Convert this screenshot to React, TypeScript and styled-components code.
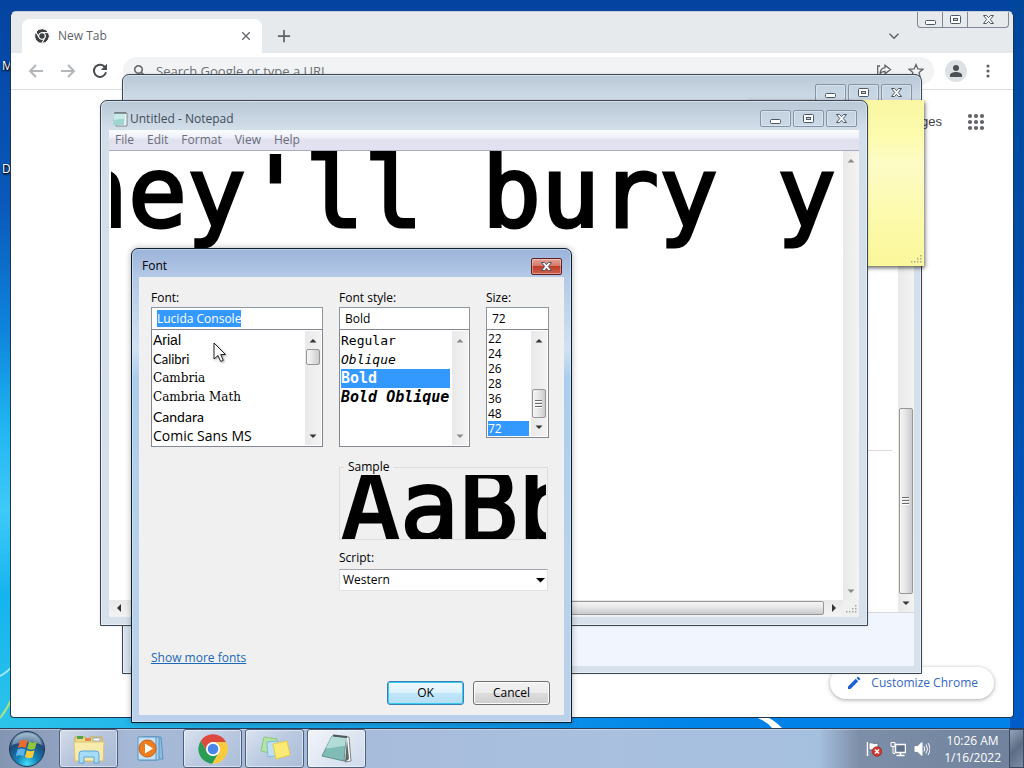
import React, { useEffect, useRef } from "react";
import styled, { createGlobalStyle, css } from "styled-components";

const ui = `"Open Sans", "Noto Sans", sans-serif`;
const mono = `"DejaVu Sans Mono", "Liberation Mono", monospace`;

const GlobalStyle = createGlobalStyle`
  *, *::before, *::after { box-sizing: border-box; }
  html, body { margin: 0; height: 100%; }
  body { font: 12px/16px ${ui}; color: #000; overflow: hidden; }
  button, input, select, textarea { font: inherit; color: inherit; margin: 0; }
  svg { display: block; }
`;

/* ---------- desktop ---------- */

const Screen = styled.div`
  display: flex;
  flex-direction: column;
  height: 100vh;
  overflow: hidden;
`;

const Desktop = styled.main`
  position: relative;
  flex: 1;
  min-height: 0;
  background:
    linear-gradient(180deg, #00479c 0, #0050ae 50%, #005cc8 100%) 100% 0 / 14px 100% no-repeat,
    linear-gradient(90deg, rgba(0, 168, 236, 0) 0%, rgba(0, 130, 232, 1) 70%) 0 100% / 100% 12px no-repeat,
    linear-gradient(180deg, #0443a0 0%, #0a58ba 28%, #0e86dc 46%, #1fb4f0 58%, #3fcaf8 70%, #14b4ee 82%, #2cc4ea 100%);
`;

const Wallpaper = styled.svg`
  position: absolute;
  inset: 0;
  width: 100%;
  height: 100%;
`;

const DesktopLabel = styled.span<{ $top: number }>`
  position: absolute;
  left: 2px;
  top: ${(p) => p.$top}px;
  color: #fff;
  text-shadow: 0 1px 2px #000, 1px 1px 2px #000;
`;

/* ---------- window frame ---------- */

const Frame = styled.section<{ $x: number; $y: number; $w: number; $h: number; $edge: number; $active?: boolean }>`
  position: absolute;
  left: ${(p) => p.$x}px;
  top: ${(p) => p.$y}px;
  width: ${(p) => p.$w}px;
  height: ${(p) => p.$h}px;
  display: flex;
  flex-direction: column;
  padding: 0 ${(p) => p.$edge}px ${(p) => p.$edge}px;
  border: 1px solid #3a4653;
  border-radius: 7px 7px 0 0;
  background: linear-gradient(180deg, #b9c8d7 0, #d2dee9 28px, #d6e1eb 100%);
  box-shadow: inset 0 0 0 1px rgba(255, 255, 255, 0.45), 0 0 3px rgba(0, 0, 0, 0.12);
  ${(p) =>
    p.$active &&
    css`
      border-color: #0d1f2b;
      background: linear-gradient(180deg, #9bb3d9 0, #b4c9e6 28px, #d0e2f2 100px, #a9cdec 130px, #b7d2ea 300px, #bbd0ea 100%);
      box-shadow: inset 0 0 0 1px rgba(220, 240, 255, 0.5), 0 0 6px rgba(0, 0, 0, 0.3);
    `}
`;

const TitleBar = styled.header<{ $h: number }>`
  flex: none;
  display: flex;
  align-items: center;
  gap: 2px;
  height: ${(p) => p.$h}px;
  padding: 6px 2px 0 3px;
`;

const Title = styled.h1<{ $soft?: boolean }>`
  flex: 1;
  margin: 0;
  font: 12px/16px ${ui};
  color: ${(p) => (p.$soft ? "#3f4c5a" : "#000")};
`;

const CaptionButton = styled.button<{ $danger?: boolean }>`
  display: grid;
  place-items: center;
  width: 31px;
  height: 17px;
  padding: 0;
  border: 1px solid #8494a8;
  border-radius: 2px;
  background: rgba(200, 214, 228, 0.5);
  box-shadow: inset 0 0 0 1px rgba(255, 255, 255, 0.35);
  ${(p) =>
    p.$danger &&
    css`
      border-color: #5f2020;
      background: linear-gradient(180deg, #e5a397 0, #d5776a 45%, #bc3d28 50%, #d0614b 100%);
    `}
`;

const MinIcon = () => (
  <svg width="13" height="11" viewBox="0 0 13 11">
    <rect x="1.5" y="6.5" width="10" height="4" rx="1" fill="#fff" stroke="#4a5868" />
  </svg>
);
const MaxIcon = () => (
  <svg width="13" height="11" viewBox="0 0 13 11">
    <rect x="1.5" y="1.5" width="10" height="8" rx="1" fill="#fff" stroke="#4a5868" />
    <rect x="4.5" y="4.5" width="4" height="2" fill="#c8d4e0" stroke="#4a5868" />
  </svg>
);
const CloseIcon = () => (
  <svg width="13" height="11" viewBox="0 0 13 11">
    <path
      d="M1.5 1.5h3l2 2.2 2-2.2h3L8.3 5.5l3.2 4h-3l-2-2.2-2 2.2h-3l3.2-4z"
      fill="#fff"
      stroke="#4a5868"
      strokeLinejoin="round"
    />
  </svg>
);

const CaptionButtons = () => (
  <>
    <CaptionButton aria-label="Minimize"><MinIcon /></CaptionButton>
    <CaptionButton aria-label="Maximize"><MaxIcon /></CaptionButton>
    <CaptionButton aria-label="Close"><CloseIcon /></CaptionButton>
  </>
);

/* ---------- scrollbars ---------- */

const Bar = styled.div<{ $across?: boolean }>`
  flex: none;
  display: flex;
  flex-direction: ${(p) => (p.$across ? "row" : "column")};
  ${(p) => (p.$across ? "height: 16px; flex: 1;" : "width: 16px;")}
  background: linear-gradient(${(p) => (p.$across ? "180deg" : "90deg")}, #e9e9e9, #f3f3f3);
`;

const Arrow = styled.button<{ $across?: boolean }>`
  flex: none;
  display: grid;
  place-items: center;
  width: ${(p) => (p.$across ? 19 : 16)}px;
  height: ${(p) => (p.$across ? 16 : 18)}px;
  padding: 0;
  border: 0;
  background: none;
`;

const Gap = styled.div<{ $size?: number }>`
  flex: ${(p) => (p.$size === undefined ? "1" : `0 0 ${p.$size}px`)};
`;

const Thumb = styled.div<{ $across?: boolean; $size?: number }>`
  flex: ${(p) => (p.$size === undefined ? "1" : `0 0 ${p.$size}px`)};
  display: grid;
  place-items: center;
  margin: ${(p) => (p.$across ? "1px 0" : "0 1px")};
  border: 1px solid #979797;
  border-radius: 2px;
  background: linear-gradient(${(p) => (p.$across ? "180deg" : "90deg")}, #f6f6f6 0, #e6e6e6 45%, #c9cbce 100%);
`;

const arrowPaths = {
  up: "M0.5 6.5L4 3l3.5 3.5z",
  down: "M0.5 2.5L4 6l3.5-3.5z",
  left: "M6 0L2 4l4 4z",
  right: "M2 0l4 4-4 4z",
};

const Tri = ({ dir, dim }: { dir: keyof typeof arrowPaths; dim?: boolean }) => (
  <svg width="8" height="8" viewBox="0 0 8 8">
    <path d={arrowPaths[dir]} fill={dim ? "#8a8a8a" : "#333"} />
  </svg>
);

const ComboArrow = () => (
  <svg width="9" height="8" viewBox="0 0 9 8">
    <path d="M0 2h9L4.500 6.500z" fill="#000" />
  </svg>
);

const Ridges = () => (
  <svg width="8" height="8" viewBox="0 0 8 8">
    <path d="M0 .5h7M0 3.5h7M0 6.5h7" stroke="#6c6c6c" />
    <path d="M0 1.5h7M0 4.5h7M0 7.5h7" stroke="#fff" />
  </svg>
);

const Grip = () => (
  <svg width="16" height="16" viewBox="0 0 16 16" fill="#a9a99a">
    {[[12, 4], [9, 7], [12, 7], [6, 10], [9, 10], [12, 10], [3, 10]].map(([x, y]) => (
      <rect key={`${x}-${y}`} x={x} y={y + 1} width="1.5" height="1.5" />
    ))}
  </svg>
);

type VBarProps = { before?: number; thumb?: number; after?: number; dim?: boolean; ridges?: boolean };
const VBar = ({ before, thumb, after, dim, ridges }: VBarProps) => (
  <Bar>
    <Arrow aria-label="Scroll up"><Tri dir="up" dim={dim} /></Arrow>
    <Gap $size={before} />
    {thumb !== undefined && <Thumb $size={thumb}>{ridges && <Ridges />}</Thumb>}
    {thumb !== undefined && <Gap $size={after} />}
    <Arrow aria-label="Scroll down"><Tri dir="down" dim={dim} /></Arrow>
  </Bar>
);

/* ---------- browser ---------- */

const Browser = styled.section`
  position: absolute;
  inset: 11px 10px 10px 10px;
  display: flex;
  flex-direction: column;
  overflow: hidden;
  border: 1px solid #1c3550;
  border-top-color: #c7ced6;
  border-radius: 6px 6px 4px 4px;
  background: #fff;
`;

const TabStrip = styled.div`
  flex: none;
  display: flex;
  height: 41px;
  padding-left: 11px;
  background: #e7eaed;
`;

const Tab = styled.div`
  display: flex;
  align-items: center;
  width: 240px;
  margin-top: 7px;
  padding: 0 11px 0 12px;
  border-radius: 8px 8px 0 0;
  background: #fff;
  color: #5f6368;
`;

const TabTitle = styled.span`
  flex: 1;
  padding-left: 8px;
`;

const PlainButton = styled.button<{ $w?: number }>`
  flex: none;
  display: grid;
  place-items: center;
  width: ${(p) => p.$w ?? 32}px;
  height: 32px;
  padding: 0;
  border: 0;
  background: none;
  color: #5f6368;
`;

const MutedButton = styled(PlainButton)`
  color: #b4b7ba;
`;

const StripTools = styled.div`
  flex: 1;
  display: flex;
  justify-content: space-between;
  padding: 8px 7px 0 6px;
`;

const FlatCaption = styled.div`
  flex: none;
  display: flex;
  height: 16px;
  margin-right: 4px;
  border: 1px solid #7f8893;
  border-top: 0;
  border-radius: 0 0 4px 4px;
`;

const FlatButton = styled.button<{ $w: number }>`
  display: grid;
  place-items: center;
  width: ${(p) => p.$w}px;
  padding: 0;
  border: 0;
  border-left: 1px solid #7f8893;
  background: none;
  &:first-child { border-left: 0; }
`;

const Toolbar = styled.div`
  flex: none;
  display: flex;
  align-items: center;
  height: 37px;
  padding: 0 9px;
  border-bottom: 1px solid #dadce0;
`;

const Omnibox = styled.label`
  flex: 1;
  display: flex;
  align-items: center;
  height: 28px;
  margin: 0 6px 0 7px;
  padding: 0 2px 0 11px;
  border-radius: 14px;
  background: #f1f3f4;
  color: #5f6368;
`;

const OmniInput = styled.input`
  flex: 1;
  min-width: 0;
  height: 24px;
  padding: 0 10px;
  border: 0;
  background: none;
  font-size: 13px;
  &::placeholder { color: #6b7075; opacity: 1; }
`;

const Avatar = styled.span`
  display: grid;
  place-items: center;
  width: 22px;
  height: 22px;
  border-radius: 50%;
  background: #dee1e6;
`;

const NewTabPage = styled.div`
  flex: 1;
  display: flex;
  flex-direction: column;
  justify-content: space-between;
  align-items: flex-end;
  padding: 16px 19px 18px;
`;

const PageLinks = styled.nav`
  display: flex;
  align-items: center;
  gap: 18px;
  padding-right: 2px;
`;

const PageLink = styled.a`
  color: #3c4043;
  font: 13px/16px "Liberation Sans", sans-serif;
  text-decoration: none;
`;

const Customize = styled.button`
  display: flex;
  align-items: center;
  gap: 9px;
  height: 32px;
  padding: 0 16px;
  border: 0;
  border-radius: 16px;
  background: #fff;
  box-shadow: 0 1px 4px rgba(0, 0, 0, 0.35);
  color: #3367c4;
`;

const chromeParts = [
  "M5.54 12.03A22 22 0 0 1 43.6 14L24 14A10 10 0 0 0 15.34 29Z",
  "M43.6 14A22 22 0 0 1 22.86 45.97L32.66 29A10 10 0 0 0 24 14Z",
  "M22.86 45.97A22 22 0 0 1 5.54 12.03L15.34 29A10 10 0 0 0 32.66 29Z",
];

const ChromeMark = ({ size, colors, core, gap }: { size: number; colors: string[]; core: string; gap?: number }) => (
  <svg width={size} height={size} viewBox="0 0 48 48">
    {chromeParts.map((d, i) => (
      <path key={d} d={d} fill={colors[i]} stroke="#fff" strokeWidth={gap ?? 0} />
    ))}
    <circle cx="24" cy="24" r="10.5" fill="#fff" />
    <circle cx="24" cy="24" r="8" fill={core} />
  </svg>
);

const Glyph = ({ d, size = 16, width = 2 }: { d: string; size?: number; width?: number }) => (
  <svg width={size} height={size} viewBox="0 0 16 16" fill="none" stroke="currentColor" strokeWidth={width}>
    <path d={d} />
  </svg>
);

const BrowserWindow = () => (
  <Browser aria-label="Browser">
    <TabStrip>
      <Tab>
        <ChromeMark size={16} colors={["#3c4043", "#3c4043", "#3c4043"]} core="#3c4043" gap={3} />
        <TabTitle>New Tab</TabTitle>
        <PlainButton $w={10} aria-label="Close tab">
          <Glyph size={10} width={2} d="M2 2l12 12M14 2L2 14" />
        </PlainButton>
      </Tab>
      <StripTools>
        <PlainButton aria-label="New tab"><Glyph size={14} d="M8 1v14M1 8h14" /></PlainButton>
        <PlainButton aria-label="Search tabs"><Glyph size={12} width={2} d="M2 5l6 6 6-6" /></PlainButton>
      </StripTools>
      <FlatCaption>
        <FlatButton $w={24} aria-label="Minimize"><MinIcon /></FlatButton>
        <FlatButton $w={25} aria-label="Maximize"><MaxIcon /></FlatButton>
        <FlatButton $w={41} aria-label="Close"><CloseIcon /></FlatButton>
      </FlatCaption>
    </TabStrip>
    <Toolbar>
      <MutedButton aria-label="Back"><Glyph d="M15 8H2M8 2L2 8l6 6" /></MutedButton>
      <MutedButton aria-label="Forward"><Glyph d="M1 8h13M8 2l6 6-6 6" /></MutedButton>
      <PlainButton aria-label="Reload">
        <svg width="16" height="16" viewBox="0 0 16 16" fill="none" stroke="#4a4d51" strokeWidth="2">
          <path d="M13.3 4.6A6.1 6.1 0 1 0 14 9.2" />
          <path d="M15 .8V7H8.8z" fill="#4a4d51" stroke="none" />
        </svg>
      </PlainButton>
      <Omnibox>
        <Glyph size={12} width={2} d="M6 1a5 5 0 1 0 .01 0M10 10l5 5" />
        <OmniInput placeholder="Search Google or type a URL" aria-label="Address" />
        <PlainButton aria-label="Share">
          <svg width="16" height="16" viewBox="0 0 16 16" fill="none" stroke="#5f6368" strokeWidth="1.3">
            <path d="M4 3H1.7v11.3h10.6V12" />
            <path d="M9 2.2L14.5 6.500 9 10.800V8.300C6.500 8.300 5 9.200 4 11 4.200 7.500 6 5 9 4.700z" />
          </svg>
        </PlainButton>
        <PlainButton aria-label="Bookmark">
          <svg width="16" height="16" viewBox="0 0 16 16" fill="none" stroke="#5f6368" strokeWidth="1.3">
            <path d="M8 1.500l1.900 4.500 4.900.4-3.700 3.200 1.100 4.800L8 11.900l-4.200 2.500 1.100-4.800L1.200 6.400l4.900-.4z" />
          </svg>
        </PlainButton>
      </Omnibox>
      <PlainButton aria-label="Profile">
        <Avatar>
          <svg width="14" height="14" viewBox="0 0 14 14" fill="#4d5156">
            <circle cx="7" cy="4" r="3" />
            <path d="M1 13V11c0-2 3.500-3 6-3s6 1 6 3v2z" />
          </svg>
        </Avatar>
      </PlainButton>
      <PlainButton aria-label="Menu">
        <svg width="4" height="14" viewBox="0 0 4 14" fill="#5f6368">
          <circle cx="2" cy="2" r="1.6" /><circle cx="2" cy="7" r="1.6" /><circle cx="2" cy="12" r="1.6" />
        </svg>
      </PlainButton>
    </Toolbar>
    <NewTabPage>
      <PageLinks>
        <PageLink href="#images">Images</PageLink>
        <PlainButton aria-label="Apps">
          <svg width="18" height="18" viewBox="0 0 18 18" fill="#5f6368">
            {[3, 9, 15].map((y) => [3, 9, 15].map((x) => <circle key={`${x}-${y}`} cx={x} cy={y} r="2.100" />))}
          </svg>
        </PlainButton>
      </PageLinks>
      <Customize>
        <svg width="16" height="16" viewBox="0 0 16 16" fill="#1a62d6">
          <path d="M2 11.500L9.700 3.800l2.500 2.500L4.500 14H2zM10.500 3l1.500-1.500 2.500 2.500L13 5.500z" />
        </svg>
        Customize Chrome
      </Customize>
    </NewTabPage>
  </Browser>
);

/* ---------- background window ---------- */

const BackClient = styled.div`
  flex: 1;
  display: flex;
  flex-direction: column;
  background: #f0f5fe;
`;

const BackPane = styled.div`
  flex: 1;
  display: flex;
  border-bottom: 1px solid #d5d9de;
  background: #fff;
`;

const BackSections = styled.div`
  flex: 1;
  display: flex;
  flex-direction: column;
  justify-content: flex-end;
  padding-right: 6px;
`;

const BackRule = styled.hr`
  width: 100%;
  margin: 0 0 161px;
  border: 0;
  border-top: 1px solid #dcdcdc;
`;

const BackFooter = styled.div`
  flex: none;
  height: 53px;
`;

/* ---------- sticky note ---------- */

const Sticky = styled.aside`
  position: absolute;
  left: 747px;
  top: 100px;
  width: 177px;
  height: 166px;
  display: flex;
  justify-content: flex-end;
  align-items: flex-end;
  background: linear-gradient(180deg, #f9f7a2 0, #fdfcae 22%, #fdfcc6 38%, #fcfaa8 75%, #faf79b 100%);
  box-shadow: 1px 2px 4px rgba(0, 0, 0, 0.6);
`;

/* ---------- notepad ---------- */

const MenuBar = styled.nav`
  flex: none;
  display: flex;
  align-items: center;
  gap: 13px;
  height: 21px;
  padding: 0 6px;
  border-bottom: 1px solid #a6abc0;
  background: linear-gradient(180deg, #fbfcfe 0, #eef1f9 35%, #e1e0ee 50%, #e4e2f0 100%);
`;

const MenuButton = styled.button`
  padding: 0;
  border: 0;
  background: none;
  color: #6a6d7a;
`;

const NotepadBody = styled.div`
  flex: 1;
  min-height: 0;
  display: flex;
  background: #fff;
`;

const Page = styled.textarea`
  flex: 1;
  min-width: 0;
  display: block;
  margin-left: 2px;
  padding: 0;
  border: 0;
  outline: 0;
  resize: none;
  overflow: hidden;
  white-space: pre;
  text-indent: -42px;
  background: #fff;
  font: 98px/84px ${mono};
  -webkit-text-stroke: 3px #000;
`;

const NotepadFoot = styled.div`
  flex: none;
  display: flex;
  height: 17px;
  background: #f0f0f0;
`;

const NotepadIcon = () => (
  <svg width="16" height="16" viewBox="0 0 16 16">
    <path d="M3 2h12v13H4z" fill="#f5f7f7" stroke="#7d8a8c" />
    <path d="M2 2.500h11L12 14H1z" fill="#9fd6d2" />
    <path d="M2 2.500h11l-.5 5L2 9z" fill="#c8ebe8" />
    <path d="M3 1v2M5 1v2M7 1v2M9 1v2M11 1v2M13 1v2" stroke="#4b5557" />
  </svg>
);

const Notepad = () => (
  <Frame $x={100} $y={100} $w={768} $h={526} $edge={8} aria-label="Notepad">
    <TitleBar $h={29}>
      <NotepadIcon />
      <Title $soft>Untitled - Notepad</Title>
      <CaptionButtons />
    </TitleBar>
    <MenuBar>
      {["File", "Edit", "Format", "View", "Help"].map((m) => (
        <MenuButton key={m}>{m}</MenuButton>
      ))}
    </MenuBar>
    <NotepadBody>
      <Page wrap="off" spellCheck={false} aria-label="Document" defaultValue="hey'll bury y" />
      <VBar dim />
    </NotepadBody>
    <NotepadFoot>
      <Bar $across>
        <Arrow $across aria-label="Scroll left"><Tri dir="left" /></Arrow>
        <Gap $size={230} />
        <Thumb $across />
        <Arrow $across aria-label="Scroll right"><Tri dir="right" /></Arrow>
      </Bar>
      <Grip />
    </NotepadFoot>
  </Frame>
);

/* ---------- font dialog ---------- */

const DialogBody = styled.form`
  flex: 1;
  display: flex;
  flex-direction: column;
  padding: 13px 14px 10px 12px;
  background: #f0f0f0;
`;

const Columns = styled.div`
  display: flex;
  align-items: flex-start;
  gap: 16px;
`;

const Column = styled.div<{ $w: number }>`
  display: flex;
  flex-direction: column;
  width: ${(p) => p.$w}px;
`;

const Label = styled.label`
  margin-bottom: 1px;
`;

const Field = styled.input`
  width: 100%;
  height: 22px;
  padding: 0 5px 1px;
  border: 1px solid #8e979f;
  border-bottom: 0;
  background: #fff;
  outline: 0;
  &::selection { background: #3399ff; color: #fff; }
`;

const ListBox = styled.div<{ $h: number }>`
  display: flex;
  height: ${(p) => p.$h}px;
  padding: 1px;
  border: 1px solid #828790;
  background: #fff;
`;

const Options = styled.ul`
  flex: 1;
  min-width: 0;
  margin: 0 2px 0 0;
  padding: 0;
  overflow: hidden;
  list-style: none;
`;

const Option = styled.li<{ $family?: string; $size?: number; $bold?: boolean; $italic?: boolean; $on?: boolean; $row: number }>`
  height: ${(p) => p.$row}px;
  white-space: nowrap;
  font-family: ${(p) => p.$family ?? ui};
  font-size: ${(p) => p.$size ?? 12}px;
  font-weight: ${(p) => (p.$bold ? 700 : 400)};
  font-style: ${(p) => (p.$italic ? "italic" : "normal")};
  line-height: ${(p) => p.$row}px;
  ${(p) => p.$on && "background: #3399ff; color: #fff;"}
`;

const Lower = styled.div`
  display: flex;
  flex-direction: column;
  width: 209px;
  margin: 12px 0 0 188px;
`;

const Sample = styled.fieldset`
  height: 81px;
  min-width: 0;
  margin: 0 0 10px;
  padding: 0 1px;
  border: 1px solid #dcdfe2;
`;

const Legend = styled.legend`
  margin-left: 3px;
  padding: 0 4px;
`;

const SampleText = styled.output`
  display: block;
  height: 64px;
  overflow: hidden;
  font: 98px/64px ${mono};
  -webkit-text-stroke: 3px #000;
`;

const SelectWrap = styled.div`
  display: grid;
  align-items: center;
  margin-top: 2px;
  > * { grid-area: 1 / 1; }
  > svg { justify-self: end; margin-right: 3px; pointer-events: none; }
`;

const Select = styled.select`
  appearance: none;
  height: 22px;
  padding: 0 3px 1px;
  border: 1px solid #dfe2e5;
  border-top-color: #a3a8ae;
  border-radius: 0;
  background: #fff;
`;

const FontLink = styled.a`
  align-self: flex-start;
  margin-top: auto;
  color: #1b67b8;
`;

const Actions = styled.div`
  display: flex;
  justify-content: flex-end;
  gap: 9px;
  margin-top: 15px;
`;

const PushButton = styled.button<{ $primary?: boolean }>`
  width: 77px;
  height: 24px;
  padding: 0;
  border: 1px solid #707070;
  border-radius: 3px;
  background: linear-gradient(180deg, #f2f2f2 0, #ebebeb 50%, #dddddd 50%, #cfcfcf 100%);
  box-shadow: inset 0 0 0 1px #fcfcfc;
  ${(p) =>
    p.$primary &&
    css`
      border-color: #3c7fb1;
      background: linear-gradient(180deg, #eff8fd 0, #dcf1fc 50%, #c0e6fa 50%, #b4def5 100%);
      box-shadow: inset 0 0 0 1px #35cdf5;
    `}
`;

const families = [
  { name: "Arial", family: `"Liberation Sans", sans-serif`, size: 14 },
  { name: "Calibri", family: `Lato, sans-serif`, size: 13 },
  { name: "Cambria", family: `"DejaVu Serif", serif`, size: 12 },
  { name: "Cambria Math", family: `"DejaVu Serif", serif`, size: 12 },
  { name: "Candara", family: `Lato, sans-serif`, size: 14 },
  { name: "Comic Sans MS", family: `"Comic Sans MS", "Open Sans", cursive`, size: 14 },
];

const faces = [
  { name: "Regular", bold: false, italic: false, size: 13 },
  { name: "Oblique", bold: false, italic: true, size: 13 },
  { name: "Bold", bold: true, italic: false, size: 15 },
  { name: "Bold Oblique", bold: true, italic: true, size: 15 },
];

const FontDialog = () => {
  const fontField = useRef<HTMLInputElement>(null);
  useEffect(() => {
    fontField.current?.focus();
    fontField.current?.select();
  }, []);

  return (
    <Frame as="div" role="dialog" aria-label="Font" $x={131} $y={248} $w={441} $h={475} $edge={7} $active>
      <TitleBar $h={28}>
        <Title>Font</Title>
        <CaptionButton $danger aria-label="Close"><CloseIcon /></CaptionButton>
      </TitleBar>
      <DialogBody onSubmit={(e: React.FormEvent) => e.preventDefault()}>
        <Columns>
          <Column $w={172}>
            <Label htmlFor="font">Font:</Label>
            <Field id="font" ref={fontField} defaultValue="Lucida Console" />
            <ListBox $h={118}>
              <Options role="listbox" aria-label="Fonts">
                {families.map((f) => (
                  <Option key={f.name} role="option" $row={19} $family={f.family} $size={f.size}>{f.name}</Option>
                ))}
              </Options>
              <VBar before={0} thumb={16} />
            </ListBox>
          </Column>
          <Column $w={131}>
            <Label htmlFor="style">Font style:</Label>
            <Field id="style" defaultValue="Bold" />
            <ListBox $h={118}>
              <Options role="listbox" aria-label="Font styles">
                {faces.map((s) => (
                  <Option
                    key={s.name}
                    role="option"
                    aria-selected={s.name === "Bold"}
                    $row={19}
                    $family={mono}
                    $size={s.size}
                    $bold={s.bold}
                    $italic={s.italic}
                    $on={s.name === "Bold"}
                  >
                    {s.name}
                  </Option>
                ))}
              </Options>
              <VBar dim />
            </ListBox>
          </Column>
          <Column $w={63}>
            <Label htmlFor="size">Size:</Label>
            <Field id="size" defaultValue="72" />
            <ListBox $h={109}>
              <Options role="listbox" aria-label="Sizes">
                {["22", "24", "26", "28", "36", "48", "72"].map((n) => (
                  <Option key={n} role="option" aria-selected={n === "72"} $row={15} $on={n === "72"}>{n}</Option>
                ))}
              </Options>
              <VBar thumb={29} after={0} ridges />
            </ListBox>
          </Column>
        </Columns>
        <Lower>
          <Sample>
            <Legend>Sample</Legend>
            <SampleText>AaBb</SampleText>
          </Sample>
          <Label htmlFor="script">Script:</Label>
          <SelectWrap>
            <Select id="script" defaultValue="Western">
              <option>Western</option>
            </Select>
            <ComboArrow />
          </SelectWrap>
        </Lower>
        <FontLink href="#fonts">Show more fonts</FontLink>
        <Actions>
          <PushButton $primary type="submit">OK</PushButton>
          <PushButton type="button">Cancel</PushButton>
        </Actions>
      </DialogBody>
    </Frame>
  );
};

const Pointer = styled.svg`
  position: absolute;
  left: 213px;
  top: 342px;
  filter: drop-shadow(1px 1px 1px rgba(0, 0, 0, 0.35));
`;

/* ---------- taskbar ---------- */

const Taskbar = styled.footer`
  flex: none;
  display: flex;
  align-items: center;
  height: 40px;
  border-top: 1px solid #2b3d58;
  background: linear-gradient(90deg, #8494b3 0, #8f9fbe 50px, #a5b8d6 130px, #a9c0df 60%, #a5bfde calc(100% - 205px), #7d8ea8 calc(100% - 165px), #6f819c 100%);
  box-shadow: inset 0 1px 0 rgba(255, 255, 255, 0.35);
`;

const StartButton = styled.button`
  display: grid;
  place-items: center;
  width: 54px;
  height: 39px;
  padding: 0;
  border: 0;
  background: none;
`;

const TaskList = styled.nav`
  flex: 1;
  display: flex;
  gap: 3px;
  padding-left: 5px;
`;

const TaskButton = styled.button<{ $open?: boolean; $active?: boolean }>`
  display: grid;
  place-items: center;
  width: 59px;
  height: 39px;
  padding: 0;
  border: 1px solid transparent;
  border-radius: 3px;
  background: none;
  ${(p) =>
    p.$open &&
    css`
      border-color: #4c5f7c;
      background: linear-gradient(135deg, rgba(235, 240, 248, 0.75) 0, rgba(200, 212, 230, 0.6) 50%, rgba(176, 192, 216, 0.6) 100%);
      box-shadow: inset 0 0 0 1px rgba(255, 255, 255, 0.5);
    `}
  ${(p) =>
    p.$active &&
    css`
      background: linear-gradient(135deg, rgba(255, 255, 255, 0.85) 0, rgba(215, 225, 240, 0.8) 100%);
    `}
`;

const Tray = styled.div`
  display: flex;
  align-items: center;
  gap: 8px;
  padding-right: 8px;
`;

const Clock = styled.time`
  padding-left: 6px;
  color: #fff;
  line-height: 17px;
  text-align: center;
`;

const ShowDesktop = styled.button`
  width: 15px;
  height: 39px;
  padding: 0;
  border: 1px solid #3c4b62;
  background: linear-gradient(135deg, #93a3b9 0, #5c6d85 50%, #7a8ba3 100%);
`;

const Orb = () => (
  <svg width="38" height="38" viewBox="0 0 38 38">
    <defs>
      <radialGradient id="orb" cx="50%" cy="92%" r="85%">
        <stop offset="0" stopColor="#43e0f8" />
        <stop offset="0.35" stopColor="#1583b8" />
        <stop offset="0.75" stopColor="#1d4a78" />
        <stop offset="1" stopColor="#6f95b3" />
      </radialGradient>
    </defs>
    <circle cx="19" cy="19" r="17.500" fill="url(#orb)" stroke="#22344e" />
    <path d="M4 15C6 7 12 3 19 3s13 4 15 12c-9-4-20-3-30 0z" fill="#fff" opacity=".33" />
    <path d="M12 11c3-1.500 5-1.500 7.500 0l-1.800 7c-2.500-1.500-5-1.500-7.700 0z" fill="#ee6a2c" />
    <path d="M21 11.500c2.500 1.500 5 1.500 7.800 0L27 18.700c-2.600 1.500-5 1.400-7.800-.2z" fill="#8fc63d" />
    <path d="M9.600 19.500c2.600-1.500 5-1.500 7.600 0l-1.800 6.800c-2.600-1.400-5-1.400-7.600 0z" fill="#5cb5ea" />
    <path d="M18.800 20.200c2.600 1.400 5 1.500 7.800 0l-1.900 7c-2.600 1.400-5 1.400-7.700-.1z" fill="#fccb3a" />
  </svg>
);

const ExplorerIcon = () => (
  <svg width="34" height="32" viewBox="0 0 34 32">
    <path d="M3 4h10l2 3h3V4h12v24H3z" fill="#efd987" stroke="#c9a94e" />
    <path d="M5 3h6v3H5z" fill="#4fa54a" /><path d="M13 5h6v3h-6z" fill="#e0894a" /><path d="M21 5h7v3h-7z" fill="#fff" stroke="#8fa6c4" />
    <path d="M2 9h30l-1 19H3z" fill="#f8ebae" stroke="#dcc476" />
    <path d="M7 30v-9q0-3 3-3h14q3 0 3 3v9h-5v-6H12v6z" fill="#a6dcf7" stroke="#5aa7d6" />
  </svg>
);

const PlayerIcon = () => (
  <svg width="28" height="28" viewBox="0 0 28 28">
    <path d="M7 2h17l2 22H9z" fill="#8ebcdf" stroke="#5c95c2" />
    <path d="M4 2h18v23H4z" fill="#a9d0ee" stroke="#5c95c2" />
    <path d="M1 2h18v23H1z" fill="#c3e0f4" stroke="#5c95c2" />
    <circle cx="10.500" cy="13.500" r="8.500" fill="#ee7d20" stroke="#c95f12" />
    <path d="M8 8.500l8 5-8 5z" fill="#fff" />
  </svg>
);

const StickyIcon = () => (
  <svg width="32" height="26" viewBox="0 0 32 26">
    <path d="M5 1l13 2-3 15-13-3z" fill="#b2e5a4" stroke="#8cc97e" />
    <path d="M8 6l11-1 2 14-12 2z" fill="#bfe1f6" stroke="#85b9dc" />
    <path d="M14 8l14-3 3 14-14 4z" fill="#fbea76" stroke="#e6cd46" />
  </svg>
);

const NotepadBigIcon = () => (
  <svg width="34" height="30" viewBox="0 0 34 30">
    <path d="M14 2l15 1 2 24-6 1z" fill="#fff" stroke="#7d8486" />
    <path d="M27 5l2 20-4 3z" fill="#5f6668" />
    <path d="M12 2l14 2-2 23L2 22z" fill="#7fbcb8" stroke="#66908f" />
    <path d="M12 2l14 2-1 8C18 12 12 15 6 14z" fill="#b2dcd8" />
    <path d="M13 1.500l14 1.500" stroke="#4f5658" strokeWidth="2" />
  </svg>
);

const FlagIcon = () => (
  <svg width="16" height="16" viewBox="0 0 16 16">
    <path d="M1.500 1v14" stroke="#fff" strokeWidth="1.500" />
    <path d="M3 2c3-1 4 1.500 9 0v7c-4 1.500-6-1-9 0z" fill="#fff" stroke="#4b5869" strokeWidth=".7" />
    <circle cx="11" cy="10.500" r="4.800" fill="#d43a32" stroke="#8a1d18" strokeWidth=".6" />
    <path d="M9 8.500l4 4M13 8.500l-4 4" stroke="#fff" strokeWidth="1.500" />
  </svg>
);

const NetworkIcon = () => (
  <svg width="16" height="16" viewBox="0 0 16 16" fill="none" stroke="#fff">
    <rect x="5.500" y="3.500" width="10" height="8" fill="#5f718b" strokeWidth="1.500" />
    <path d="M10.500 12v2M6.500 14.500h8" strokeWidth="1.500" />
    <path d="M1 1.500h4v4H1zM3 5.500v7h2" />
  </svg>
);

const VolumeIcon = () => (
  <svg width="16" height="16" viewBox="0 0 16 16" fill="none" stroke="#fff">
    <path d="M1 5.500h2.500L8 1.500v13l-4.500-4H1z" fill="#fff" />
    <path d="M10 5.500q1.500 2.500 0 5M12 3.500q3 4.500 0 9M14 2q4 6 0 12" />
  </svg>
);

const App = () => (
  <Screen>
    <GlobalStyle />
    <Desktop>
      <Wallpaper viewBox="0 0 1024 728" preserveAspectRatio="none" aria-hidden>
        <path d="M0 676Q8 672 14 664" stroke="#c4f2ff" strokeWidth="2" fill="none" opacity=".8" />
        <path d="M0 718Q8 708 13 696" stroke="#c9e86a" strokeWidth="2" fill="none" opacity=".8" />
        <path d="M752 716Q766 720 772 728L782 728Q772 718 764 716Z" fill="#fff" />
      </Wallpaper>
      <DesktopLabel $top={58}>M</DesktopLabel>
      <DesktopLabel $top={161}>D</DesktopLabel>
      <BrowserWindow />
      <Frame $x={122} $y={74} $w={800} $h={600} $edge={7} aria-label="Background window">
        <TitleBar $h={29}>
          <Title />
          <CaptionButtons />
        </TitleBar>
        <BackClient>
          <BackPane>
            <BackSections><BackRule /></BackSections>
            <VBar thumb={186} after={0} ridges />
          </BackPane>
          <BackFooter />
        </BackClient>
      </Frame>
      <Sticky aria-label="Sticky note"><Grip /></Sticky>
      <Notepad />
      <FontDialog />
      <Pointer width="14" height="22" viewBox="0 0 14 22">
        <path d="M1 1v16l4-3.500 2.700 6 2.600-1.200L7.700 12.500H12.500z" fill="#fff" stroke="#222" />
      </Pointer>
    </Desktop>
    <Taskbar>
      <StartButton aria-label="Start"><Orb /></StartButton>
      <TaskList>
        <TaskButton $open aria-label="Explorer"><ExplorerIcon /></TaskButton>
        <TaskButton aria-label="Media Player"><PlayerIcon /></TaskButton>
        <TaskButton $open aria-label="Chrome">
          <ChromeMark size={32} colors={["#dc4a3d", "#fccb3d", "#2a9d55"]} core="#4a86ea" />
        </TaskButton>
        <TaskButton $open aria-label="Sticky Notes"><StickyIcon /></TaskButton>
        <TaskButton $open $active aria-label="Notepad"><NotepadBigIcon /></TaskButton>
      </TaskList>
      <Tray>
        <FlagIcon />
        <NetworkIcon />
        <VolumeIcon />
        <Clock>10:26 AM<br />1/16/2022</Clock>
      </Tray>
      <ShowDesktop aria-label="Show desktop" />
    </Taskbar>
  </Screen>
);

export default App;
